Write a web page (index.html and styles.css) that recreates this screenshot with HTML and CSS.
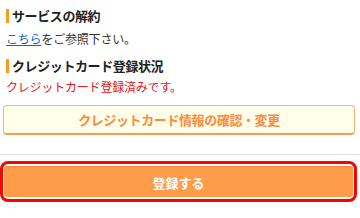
FILE: index.html
```html
<!DOCTYPE html>
<html lang="ja">
  <head>
    <meta charset="UTF-8" />
    <title>登録内容の確認</title>
    <meta name="viewport" content="width=device-width, initial-scale=1.0" />
    <link rel="stylesheet" href="styles.css">
  </head>
  <body>
    <div class="contents">
      <div class="section">
        <h2 class="midashi">サービスの解約</h2>
        <p class="text"><a href="#">こちら</a>をご参照下さい。</p>
      </div>

      <div class="section">
        <h2 class="midashi midashi-2">クレジットカード登録状況</h2>
        <p class="text text-red">クレジットカード登録済みです。</p>
      </div>

      <button class="btn-card">クレジットカード情報の確認・変更</button>
    </div>

    <div class="footer">
      <div class="btn-wrap">
        <button class="btn-submit">登録する</button>
      </div>
    </div>
  </body>
</html>
```

FILE: styles.css
```css
body {
  font-family: "Noto Sans CJK JP", "Noto Sans", sans-serif;
  background-color: #ffffff;
  color: #333333;
  margin: 0;
  padding: 0;
}

.contents {
  padding: 0 5px 19px 3px;
}

.section {
  padding-left: 3px;
}

.midashi {
  margin: 9px 0 0;
  padding-left: 3px;
  border-left: 3px solid #ff9a1a;
  font-size: 13px;
  font-weight: bold;
  line-height: 14px;
  color: #222222;
  letter-spacing: -0.4px;
}

.midashi-2 {
  margin-top: 12px;
}

.text {
  margin: 8px 0 0;
  font-size: 12px;
  line-height: 16px;
  letter-spacing: -0.2px;
}

.text a {
  color: #0a63c9;
  text-decoration: underline;
}

.text-red {
  margin-top: 6px;
  color: #e8151b;
}

.btn-card {
  display: block;
  width: 100%;
  height: 30px;
  margin-top: 10px;
  background: #fffeea;
  border: 1px solid #ffae74;
  border-bottom: 2px solid #ff9a52;
  border-radius: 4px;
  color: #ff8a3c;
  font-family: inherit;
  font-size: 13px;
  font-weight: bold;
  letter-spacing: -0.4px;
  cursor: pointer;
}

.footer {
  border-top: 1px solid #e3e3e3;
  padding: 6px 3px 0 0;
}

.btn-wrap {
  border: 3px solid #ff0000;
  border-radius: 8px;
  padding: 2px 1px;
}

.btn-submit {
  display: block;
  width: 100%;
  height: 31px;
  background: #ff9c4c;
  border: none;
  border-top: 1px solid #f0883a;
  border-radius: 3px;
  color: #ffffff;
  font-family: inherit;
  font-size: 13px;
  font-weight: bold;
  cursor: pointer;
}
```
